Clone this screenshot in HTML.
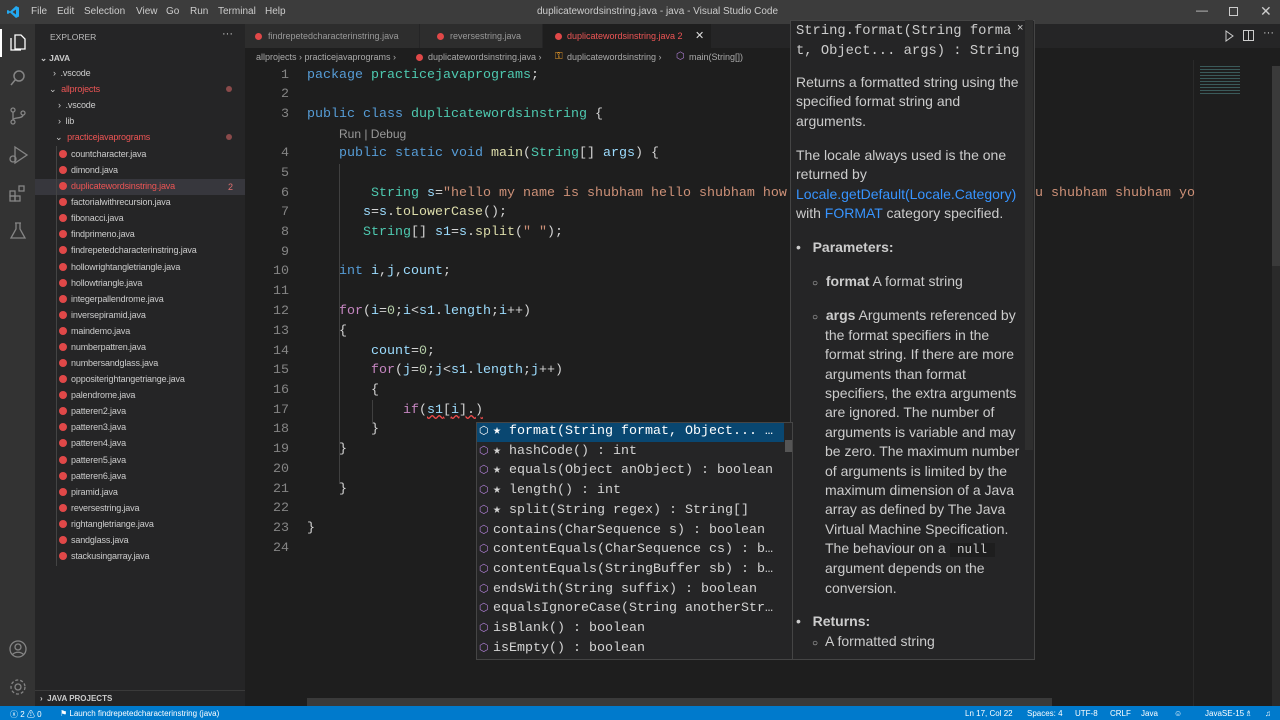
<!DOCTYPE html><html><head><meta charset="utf-8"><style>
*{margin:0;padding:0;box-sizing:border-box}
body{width:1280px;height:720px;overflow:hidden;background:#1e1e1e;font-family:"Liberation Sans",sans-serif;position:relative;color:#ccc}
.a{position:absolute;white-space:pre}
.m{font-family:"Liberation Mono",monospace;font-size:13.33px;line-height:20px}
.k{color:#569cd6}.t{color:#4ec9b0}.s{color:#ce9178}.v{color:#9cdcfe}.f{color:#dcdcaa}.c{color:#c586c0}.p{color:#d4d4d4}.n{color:#b5cea8}
.ln{color:#858585;width:40px;text-align:right}
.sb{font-size:9px;letter-spacing:-0.15px;color:#ccc;line-height:16px}
.dot{position:absolute;width:8px;height:8px;border-radius:50%;background:#e04848}
.hv{font-size:14px;color:#ccc;line-height:19.5px}
.sg{font-family:"Liberation Mono",monospace;font-size:13.33px;color:#d4d4d4;line-height:19.7px}
.cube{color:#b180d7;font-size:11px}
.mn{position:absolute;top:6px;font-size:10px;color:#ccc}
.st{position:absolute;top:709px;font-size:8px;color:#fff}
.bc{position:absolute;top:52px;font-size:9px;color:#aaa}
</style></head><body>
<div class="a" style="left:0;top:0;width:1280px;height:24px;background:#3c3c3c"></div>
<svg class="a" style="left:7px;top:6px" width="12" height="12" viewBox="0 0 12 12"><path d="M9 0L12 1.5V10.5L9 12L3 6.5L1 8L0 7.5V4.5L1 4L3 5.5ZM9 3.5L5.5 6L9 8.5Z" fill="#23a9f2"/></svg>
<div class="mn" style="left:31px">File</div><div class="mn" style="left:57px">Edit</div><div class="mn" style="left:84px">Selection</div><div class="mn" style="left:136px">View</div><div class="mn" style="left:166px">Go</div><div class="mn" style="left:190px">Run</div><div class="mn" style="left:218px">Terminal</div><div class="mn" style="left:265px">Help</div>
<div class="a" style="left:537px;top:6px;font-size:10px;color:#ccc">duplicatewordsinstring.java - java - Visual Studio Code</div>
<div class="a" style="left:1196px;top:3px;font-size:12px;color:#ccc">—</div>
<div class="a" style="left:1229px;top:7px;width:9px;height:9px;border:1px solid #ccc"></div>
<div class="a" style="left:1260px;top:3px;font-size:14px;color:#ccc">✕</div>
<div class="a" style="left:0;top:24px;width:35px;height:682px;background:#333"></div>
<div class="a" style="left:0;top:29px;width:2px;height:28px;background:#fff"></div>
<svg class="a" style="left:8px;top:32px" width="20" height="20" viewBox="0 0 20 20" fill="none" stroke="#fff" stroke-width="1.3"><path d="M7 3h6l4 4v10H7z M3 6v12h10"/></svg>
<svg class="a" style="left:8px;top:68px" width="20" height="20" fill="none" stroke="#858585" stroke-width="1.5"><circle cx="11" cy="8" r="5"/><path d="M7.5 11.5L3 17"/></svg>
<svg class="a" style="left:8px;top:106px" width="20" height="20" fill="none" stroke="#858585" stroke-width="1.3"><circle cx="5" cy="4" r="2"/><circle cx="5" cy="16" r="2"/><circle cx="15" cy="7" r="2"/><path d="M5 6v8M15 9c0 4-10 2-10 5"/></svg>
<svg class="a" style="left:7px;top:144px" width="22" height="22" fill="none" stroke="#858585" stroke-width="1.3"><path d="M8 3l12 8-12 8z"/><circle cx="6" cy="15" r="3"/></svg>
<svg class="a" style="left:8px;top:184px" width="20" height="20" fill="none" stroke="#858585" stroke-width="1.3"><rect x="2" y="7" width="5" height="5"/><rect x="2" y="12" width="5" height="5"/><rect x="7" y="12" width="5" height="5"/><rect x="11" y="2" width="5" height="5"/></svg>
<svg class="a" style="left:9px;top:221px" width="18" height="20" fill="none" stroke="#858585" stroke-width="1.3"><path d="M6 2h6M7 2v6L2 17h14L11 8V2"/></svg>
<svg class="a" style="left:8px;top:639px" width="20" height="20" fill="none" stroke="#858585" stroke-width="1.3"><circle cx="10" cy="10" r="8"/><circle cx="10" cy="8" r="3"/><path d="M4.5 15.5c3-3 8-3 11 0"/></svg>
<svg class="a" style="left:8px;top:677px" width="20" height="20" fill="none" stroke="#858585" stroke-width="1.3"><circle cx="10" cy="10" r="3"/><circle cx="10" cy="10" r="7" stroke-dasharray="3 2"/></svg>
<div class="a" style="left:35px;top:24px;width:210px;height:682px;background:#252526"></div>
<div class="a" style="left:50px;top:32px;font-size:8.5px;color:#bbb">EXPLORER</div>
<div class="a" style="left:222px;top:28px;font-size:11px;color:#ccc">···</div>
<div class="a sb" style="left:40px;top:50px;font-weight:bold;font-size:8.5px">⌄ JAVA</div>
<div class="a sb" style="left:53px;top:65px">›  .vscode</div>
<div class="a sb" style="left:49px;top:81px;color:#e55"><span style="color:#ccc">⌄</span>  allprojects</div>
<div class="dot" style="left:226px;top:86px;width:6px;height:6px;background:#8a4a4a"></div>
<div class="a sb" style="left:58px;top:97px">›  .vscode</div>
<div class="a sb" style="left:58px;top:113px">›  lib</div>
<div class="a sb" style="left:55px;top:129px;color:#e55"><span style="color:#ccc">⌄</span>  practicejavaprograms</div>
<div class="dot" style="left:226px;top:134px;width:6px;height:6px;background:#8a4a4a"></div>
<div class="a" style="left:35px;top:179px;width:210px;height:16px;background:#37373d"></div>
<div class="a" style="left:56px;top:146px;width:1px;height:420px;background:#444"></div>
<div id="files"></div>
<div class="a" style="left:228px;top:179px;font-size:9px;color:#e07070;line-height:16px">2</div>
<div class="a" style="left:35px;top:690px;width:210px;height:1px;background:#3a3a3a"></div>
<div class="a" style="left:40px;top:694px;font-size:8px;color:#ccc;font-weight:bold">›  JAVA PROJECTS</div>
<div class="a" style="left:245px;top:24px;width:1035px;height:24px;background:#252526"></div>
<div class="a" style="left:245px;top:24px;width:174px;height:24px;background:#2d2d2d"></div>
<div class="a" style="left:420px;top:24px;width:122px;height:24px;background:#2d2d2d"></div>
<div class="a" style="left:543px;top:24px;width:168px;height:24px;background:#1e1e1e"></div>
<div class="dot" style="left:255px;top:33px;width:7px;height:7px"></div>
<div class="a" style="left:268px;top:31px;font-size:9px;color:#999">findrepetedcharacterinstring.java</div>
<div class="dot" style="left:437px;top:33px;width:7px;height:7px"></div>
<div class="a" style="left:450px;top:31px;font-size:9px;color:#999">reversestring.java</div>
<div class="dot" style="left:555px;top:33px;width:7px;height:7px"></div>
<div class="a" style="left:567px;top:31px;font-size:9px;color:#e55">duplicatewordsinstring.java 2</div>
<div class="a" style="left:695px;top:29px;font-size:11px;color:#ddd">✕</div>
<svg class="a" style="left:1223px;top:30px" width="12" height="12" fill="none" stroke="#ccc"><path d="M3 1l7 5-7 5z"/></svg>
<div class="a" style="left:1243px;top:30px;width:11px;height:11px;border:1px solid #ccc"></div>
<div class="a" style="left:1248px;top:30px;width:1px;height:11px;background:#ccc"></div>
<div class="a" style="left:1263px;top:27px;font-size:11px;color:#ccc">···</div>
<div class="bc" style="left:256px">allprojects ›  practicejavaprograms ›</div>
<div class="dot" style="left:416px;top:54px;width:7px;height:7px"></div>
<div class="bc" style="left:428px">duplicatewordsinstring.java ›</div>
<div class="bc" style="left:555px;top:51px;font-size:10px;color:#ee9d28">⚿</div>
<div class="bc" style="left:567px">duplicatewordsinstring ›</div>
<div class="bc cube" style="left:676px;top:51px;font-size:10px;color:#b180d7">⬡</div>
<div class="bc" style="left:689px">main(String[])</div>
<div class="a" style="left:1193px;top:60px;width:80px;height:646px;background:#1e1e1e;border-left:1px solid #2a2a2a"></div>
<div class="a" style="left:1200px;top:66px;width:40px;height:28px;background:repeating-linear-gradient(#3a5a5a 0 1px,transparent 1px 3px)"></div>
<div class="a" style="left:1272px;top:66px;width:8px;height:640px;background:#2a2a2a"></div>
<div class="a" style="left:1272px;top:66px;width:8px;height:200px;background:#3a3a3a"></div>
<div id="code"></div>
<div class="a" style="left:339px;top:127px;font-size:12px;color:#999">Run | Debug</div>
<div class="a" style="left:339px;top:164px;width:1px;height:320px;background:#404040"></div>
<div class="a" style="left:372px;top:400px;width:1px;height:24px;background:#404040"></div>
<div class="a" style="left:1035px;top:184px;font-family:'Liberation Mono',monospace;font-size:13.33px;color:#ce9178;line-height:20px;white-space:pre">u shubham shubham yo</div>
<div class="a" style="left:307px;top:698px;width:745px;height:8px;background:#3a3a3a"></div>
<div class="a" style="left:790px;top:20px;width:245px;height:640px;background:#252526;border:1px solid #454545"></div>
<div class="a" style="left:1025px;top:20px;width:8px;height:430px;background:#2e2e2e"></div>
<div class="a" style="left:1017px;top:22px;font-size:11px;color:#ccc">×</div>
<div class="a" style="left:796px;top:22px;font-family:'Liberation Mono',monospace;font-size:13.8px;line-height:20px;color:#ccc">String.format(String forma
t, Object... args) : String</div>
<div id="hover"></div>
<div class="a" style="left:476px;top:422px;width:317px;height:238px;background:#252526;border:1px solid #454545"></div>
<div class="a" style="left:477px;top:423px;width:307px;height:19px;background:#094771"></div>
<div class="a" style="left:785px;top:440px;width:7px;height:12px;background:#555"></div>
<div id="sugg"></div>
<div class="a" style="left:0;top:706px;width:1280px;height:14px;background:#007acc"></div>
<div class="st" style="left:10px">ⓧ 2 ⚠ 0</div>
<div class="st" style="left:60px">⚑ Launch findrepetedcharacterinstring (java)</div>
<div class="st" style="left:965px">Ln 17, Col 22</div>
<div class="st" style="left:1027px">Spaces: 4</div>
<div class="st" style="left:1075px">UTF-8</div>
<div class="st" style="left:1110px">CRLF</div>
<div class="st" style="left:1141px">Java</div>
<div class="st" style="left:1174px">☺</div>
<div class="st" style="left:1205px">JavaSE-15</div>
<div class="st" style="left:1245px">♗</div>
<div class="st" style="left:1265px">♫</div>
<script>
var files="countcharacter dimond duplicatewordsinstring factorialwithrecursion fibonacci findprimeno findrepetedcharacterinstring hollowrightangletriangle hollowtriangle integerpallendrome inversepiramid maindemo numberpattren numbersandglass oppositerightangetriange palendrome patteren2 patteren3 patteren4 patteren5 patteren6 piramid reversestring rightangletriange sandglass stackusingarray".split(" ");
var h="";files.forEach(function(f,i){var y=154+i*16.08;h+='<div class="dot" style="left:59px;top:'+(y-4)+'px"></div><div class="a sb" style="left:71px;top:'+(y-8)+'px;'+(i==2?'color:#e55':'')+'">'+f+'.java</div>';});
document.getElementById("files").outerHTML=h;
var L=[[76,'<span class="k">package</span> <span class="t">practicejavaprograms</span><span class="p">;</span>'],[95,''],
[115,'<span class="k">public</span> <span class="k">class</span> <span class="t">duplicatewordsinstring</span> <span class="p">{</span>'],
[154,'    <span class="k">public</span> <span class="k">static</span> <span class="k">void</span> <span class="f">main</span><span class="p">(</span><span class="t">String</span><span class="p">[] </span><span class="v">args</span><span class="p">) {</span>'],[174,''],
[194,'        <span class="t">String</span> <span class="v">s</span><span class="p">=</span><span class="s">"hello my name is shubham hello shubham how</span>'],
[213,'       <span class="v">s</span><span class="p">=</span><span class="v">s</span><span class="p">.</span><span class="f">toLowerCase</span><span class="p">();</span>'],
[233,'       <span class="t">String</span><span class="p">[] </span><span class="v">s1</span><span class="p">=</span><span class="v">s</span><span class="p">.</span><span class="f">split</span><span class="p">(</span><span class="s">" "</span><span class="p">);</span>'],[253,''],
[272,'    <span class="k">int</span> <span class="v">i</span><span class="p">,</span><span class="v">j</span><span class="p">,</span><span class="v">count</span><span class="p">;</span>'],[292,''],
[312,'    <span class="c">for</span><span class="p">(</span><span class="v">i</span><span class="p">=</span><span class="n">0</span><span class="p">;</span><span class="v">i</span><span class="p">&lt;</span><span class="v">s1</span><span class="p">.</span><span class="v">length</span><span class="p">;</span><span class="v">i</span><span class="p">++)</span>'],
[332,'    <span class="p">{</span>'],
[352,'        <span class="v">count</span><span class="p">=</span><span class="n">0</span><span class="p">;</span>'],
[371,'        <span class="c">for</span><span class="p">(</span><span class="v">j</span><span class="p">=</span><span class="n">0</span><span class="p">;</span><span class="v">j</span><span class="p">&lt;</span><span class="v">s1</span><span class="p">.</span><span class="v">length</span><span class="p">;</span><span class="v">j</span><span class="p">++)</span>'],
[391,'        <span class="p">{</span>'],
[411,'            <span class="c">if</span><span class="p">(</span><span class="v" style="text-decoration:underline wavy #f14c4c">s1</span><span class="p" style="text-decoration:underline wavy #f14c4c">[</span><span class="v" style="text-decoration:underline wavy #f14c4c">i</span><span class="p" style="text-decoration:underline wavy #f14c4c">].)</span>'],
[430,'        <span class="p">}</span>'],[450,'    <span class="p">}</span>'],[470,''],[490,'    <span class="p">}</span>'],[509,''],[529,'<span class="p">}</span>'],[549,'']];
h="";L.forEach(function(l,i){h+='<div class="a m ln" style="left:249px;top:'+(l[0]-10)+'px">'+(i+1)+'</div><div class="a m" style="left:307px;top:'+(l[0]-10)+'px">'+l[1]+'</div>';});
document.getElementById("code").outerHTML=h;
var H=[[83,796,'Returns a formatted string using the'],[102,796,'specified format string and'],[122,796,'arguments.'],
[156,796,'The locale always used is the one'],[175,796,'returned by'],[195,796,'<span style="color:#3794ff">Locale.getDefault(Locale.Category)</span>'],[214,796,'with <span style="color:#3794ff">FORMAT</span> category specified.'],
[248,796,'•   <b>Parameters:</b>'],
[282,812,'<span style="font-size:10px">○</span>  <b>format</b> A format string'],
[316,812,'<span style="font-size:10px">○</span>  <b>args</b> Arguments referenced by'],[336,825,'the format specifiers in the'],[355,825,'format string. If there are more'],[375,825,'arguments than format'],[394,825,'specifiers, the extra arguments'],[413,825,'are ignored. The number of'],[433,825,'arguments is variable and may'],[452,825,'be zero. The maximum number'],[472,825,'of arguments is limited by the'],[491,825,'maximum dimension of a Java'],[510,825,'array as defined by The Java'],[530,825,'Virtual Machine Specification.'],[549,825,'The behaviour on a <span style="background:#1e1e1e;font-family:Liberation Mono,monospace;font-size:12.5px"> null </span>'],[569,825,'argument depends on the'],[589,825,'conversion.'],
[622,796,'•   <b>Returns:</b>'],[642,812,'<span style="font-size:10px">○</span>  A formatted string']];
h="";H.forEach(function(l){h+='<div class="a hv" style="left:'+l[1]+'px;top:'+(l[0]-10)+'px">'+l[2]+'</div>';});
document.getElementById("hover").outerHTML=h;
var S=[["★ format(String format, Object... …",1],["★ hashCode() : int"],["★ equals(Object anObject) : boolean"],["★ length() : int"],["★ split(String regex) : String[]"],["contains(CharSequence s) : boolean"],["contentEquals(CharSequence cs) : b…"],["contentEquals(StringBuffer sb) : b…"],["endsWith(String suffix) : boolean"],["equalsIgnoreCase(String anotherStr…"],["isBlank() : boolean"],["isEmpty() : boolean"]];
h="";S.forEach(function(s,i){var y=432+i*19.7;h+='<div class="a cube" style="left:479px;top:'+(y-8)+'px;'+(s[1]?'color:#fff':'')+'">⬡</div><div class="a sg" style="left:493px;top:'+(y-10)+'px;'+(s[1]?'color:#fff':'')+'">'+s[0]+'</div>';});
document.getElementById("sugg").outerHTML=h;
</script>
</body></html>
